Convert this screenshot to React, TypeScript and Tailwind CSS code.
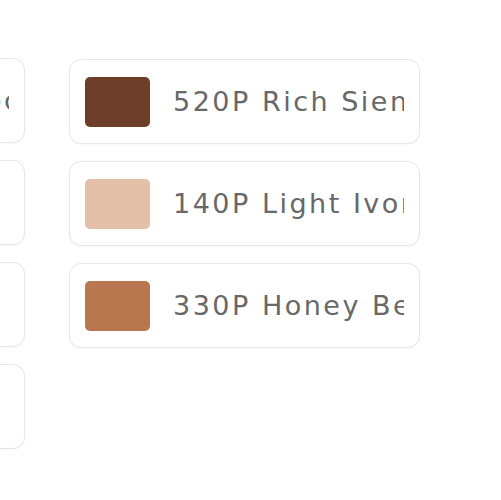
import React from 'react'

type Shade = { code: string; name: string; color: string }

const leftCol: Shade[] = [
  { code: '610P', name: 'Deep Mocaccino', color: '#4a2a1c' },
  { code: '110P', name: 'Fair', color: '#f0d2bd' },
  { code: '220P', name: 'Sand', color: '#d6a67f' },
  { code: '420P', name: 'Tan', color: '#9c5d3b' },
]

const rightCol: Shade[] = [
  { code: '520P', name: 'Rich Sienna', color: '#6d3f2a' },
  { code: '140P', name: 'Light Ivory', color: '#e3c0a7' },
  { code: '330P', name: 'Honey Beige', color: '#b8774f' },
]

function ShadeCard({ shade }: { shade: Shade }) {
  return (
    <div className="h-[85px] w-[351px] shrink-0 rounded-[12px] border-[1.5px] border-[#e6e6e6] bg-white flex items-center pl-[15px] pr-[15px] gap-[23px] overflow-hidden shadow-[0_1px_2px_rgba(0,0,0,0.03)]">
      <div
        className="w-[65px] h-[50px] rounded-[5px] shrink-0"
        style={{ backgroundColor: shade.color }}
      />
      <span className="text-[27px] text-[#686868] whitespace-nowrap overflow-hidden font-['DejaVu_Sans',sans-serif] tracking-[2.5px] pt-[2px]">
        {shade.code} {shade.name}
      </span>
    </div>
  )
}

function App() {
  return (
    <div className="w-[501px] h-[500px] overflow-hidden bg-white">
      <div className="flex gap-[44px] pt-[58px] ml-[-326px]">
        <div className="flex flex-col gap-[17px]">
          {leftCol.map((s) => (
            <ShadeCard key={s.code} shade={s} />
          ))}
        </div>
        <div className="flex flex-col gap-[17px] pt-[1px]">
          {rightCol.map((s) => (
            <ShadeCard key={s.code} shade={s} />
          ))}
        </div>
      </div>
    </div>
  )
}

export default App
